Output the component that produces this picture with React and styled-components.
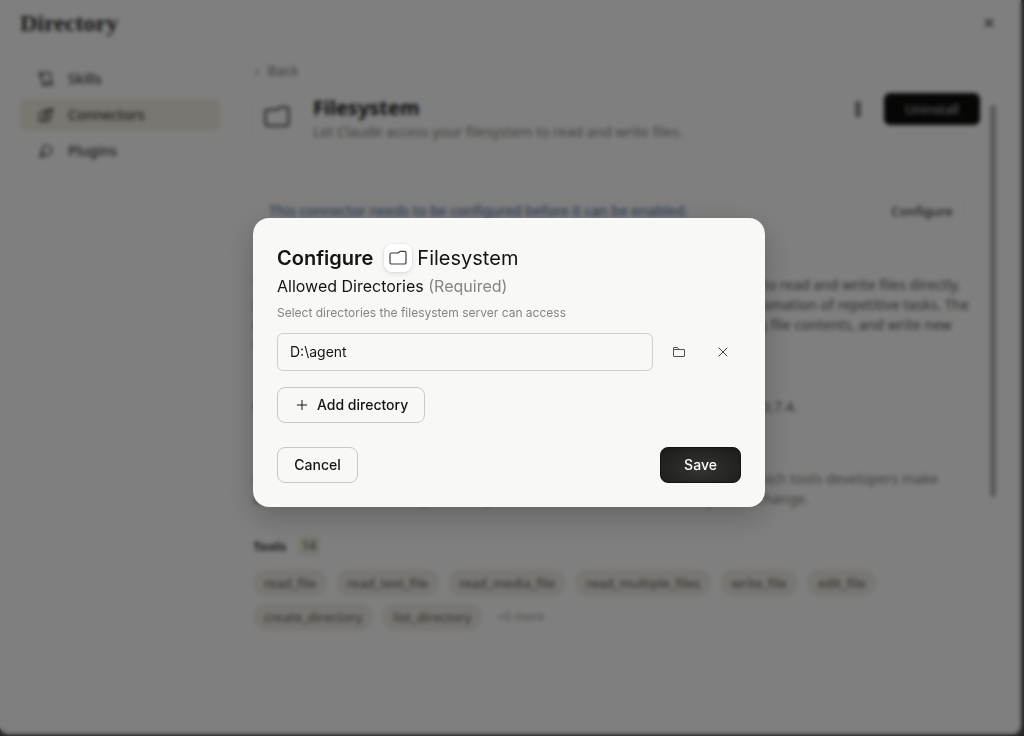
import React, { useState } from "react";
import styled, { createGlobalStyle } from "styled-components";
import { MoreVertical, Plus, Scroll, X } from "lucide-react";

const GlobalStyle = createGlobalStyle`
    * {
        box-sizing: border-box;
    }
    body {
        margin: 0;
        background: #4a4a4a;
        color: #141413;
        font-family: "Noto Sans", sans-serif;
        font-size: 14px;
        line-height: 20px;
    }
    button, input {
        font: inherit;
        color: inherit;
    }
    h1, h2, h3, p, ul {
        margin: 0;
        padding: 0;
    }
    ul {
        list-style: none;
    }
`

const Page = styled.div`
    min-height: 100vh;
    padding: 0 3px 2px 0;
    display: flex;
`

const Panel = styled.div`
    flex: 1;
    min-width: 0;
    padding: 8px 25px 24px 20px;
    background: #fff;
    border-radius: 0 0 8px 8px;
`

const PanelHeader = styled.header`
    display: flex;
    align-items: center;
    justify-content: space-between;
    height: 30px;

    h1 {
        font-family: "Liberation Serif", serif;
        font-size: 24px;
        line-height: 30px;
        color: #2a2a28;
    }
`

const PlainButton = styled.button`
    display: inline-flex;
    align-items: center;
    justify-content: center;
    padding: 0;
    border: 0;
    background: none;
    color: #3d3d3a;
    width: ${pr => pr.$size};
    height: ${pr => pr.$size};
`

const Columns = styled.div`
    display: flex;
    gap: 33px;
    padding-top: 23px;
`

const Sidebar = styled.nav`
    flex: 0 0 200px;
    display: flex;
    flex-direction: column;
    gap: 4px;
    padding-top: 2px;
`

const SideLink = styled.a`
    display: flex;
    align-items: center;
    gap: 14px;
    height: 32px;
    padding: 0 16px 0 18px;
    border-radius: 6px;
    font-weight: 500;
    text-decoration: none;
    color: #3d3d3a;
    background: ${pr => (pr.$active ? "#f0eee2" : "none")};
`

const Main = styled.main`
    flex: 1;
    min-width: 0;
`

const BackLink = styled.a`
    display: flex;
    gap: 8px;
    height: 20px;
    padding-left: 2px;
    color: #85847e;
    text-decoration: none;
`

const ScrollRow = styled.div`
    display: flex;
    gap: 10px;
    padding-top: 12px;
`

const ScrollBody = styled.div`
    flex: 1;
    min-width: 0;
`

const Thumb = styled.div`
    flex: 0 0 6px;
    height: 392px;
    margin-top: 12px;
    border-radius: 3px;
    background: #b4b4b4;
`

const TitleRow = styled.div`
    display: flex;
    align-items: flex-start;
    gap: 12px;
`

const IconTile = styled.span`
    display: inline-flex;
    align-items: center;
    justify-content: center;
    flex: none;
    width: ${pr => pr.$size};
    height: ${pr => pr.$size};
    border-radius: 8px;
    background: #fff;
    box-shadow: 0 0 0 1px rgba(0, 0, 0, 0.03), 0 2px 5px rgba(0, 0, 0, ${pr => (pr.$flat ? 0.02 : 0.1)});
`

const TitleText = styled.div`
    flex: 1;
    padding-top: 3px;

    h2 {
        font-size: 20px;
        line-height: 24px;
    }
    p {
        line-height: 24px;
        color: #85847e;
    }
`

const TitleActions = styled.div`
    display: flex;
    align-items: center;
    gap: 16px;
`

const Uninstall = styled.button`
    width: 96px;
    height: 32px;
    border: 0;
    border-radius: 6px;
    background: #0c0c0b;
    color: #c8c8c8;
    font-size: 13px;
`

const Notice = styled.div`
    display: flex;
    align-items: center;
    justify-content: space-between;
    margin-top: 51px;
    padding: 0 16px;
    color: #4a6da3;
`

const ConfigureButton = styled.button`
    width: 84px;
    height: 32px;
    border: 1px solid #f6f5f2;
    border-radius: 8px;
    background: #fff;
    color: #3d3d3a;
    font-size: 13px;
    font-weight: 500;
`

const Lines = styled.p`
    margin-top: ${pr => pr.$top};
    color: ${pr => pr.$color || "#5e5d59"};
    white-space: nowrap;

    span {
        display: block;
    }
`

const ToolsHeading = styled.h3`
    display: flex;
    gap: 12px;
    margin-top: 27px;
    font-size: 13px;
    line-height: 20px;
    color: #3d3d3a;

    span {
        padding: 0 4px;
        border-radius: 4px;
        background: #f0eee2;
        font-size: 12px;
        font-weight: 400;
    }
`

const Chips = styled.ul`
    display: flex;
    flex-wrap: wrap;
    gap: 6px 9px;
    margin-top: 13px;
    font-size: 13px;
`

const Chip = styled.li`
    padding: 4px ${pr => (pr.$more ? "6px" : "11px")};
    border-radius: 14px;
    background: ${pr => (pr.$more ? "none" : "#f0eee6")};
    color: ${pr => (pr.$more ? "#a09f99" : "#5e5d59")};
    font-size: ${pr => (pr.$more ? "12px" : "13px")};
`

const Overlay = styled.div`
    position: fixed;
    inset: 0;
    display: flex;
    align-items: center;
    justify-content: center;
    padding: 0 6px 11px 0;
    background: rgba(0, 0, 0, 0.5);
    backdrop-filter: blur(2px);
`

const Modal = styled.form`
    width: 512px;
    max-width: 100%;
    padding: 24px;
    border-radius: 16px;
    background: #f8f8f6;
    box-shadow: 0 10px 30px rgba(0, 0, 0, 0.22);
    font-family: Inter, sans-serif;
`

const ModalTitle = styled.h2`
    display: flex;
    align-items: center;
    height: 32px;
    font-size: 20px;
    line-height: 32px;
    font-weight: 400;

    strong {
        margin-right: 11px;
        font-weight: 600;
    }
    ${IconTile} {
        margin-right: 5px;
    }
`

const FieldLabel = styled.label`
    display: block;
    font-size: 16px;
    line-height: 24px;

    span {
        color: #85847e;
    }
`

const Hint = styled.p`
    margin-top: 5px;
    font-size: 12px;
    line-height: 20px;
    color: #85847e;
`

const PathRow = styled.div`
    display: flex;
    align-items: center;
    gap: 8px;
    margin: 10px 0 16px;
`

const PathInput = styled.input`
    flex: 1;
    min-width: 0;
    height: 38px;
    padding: 0 12px 2px;
    border: 1px solid #cfcecb;
    border-radius: 6px;
    background: none;
    outline: none;
`

const Button = styled.button`
    display: inline-flex;
    align-items: center;
    justify-content: center;
    gap: 7px;
    height: 36px;
    padding: 0 16px;
    border: 1px solid ${pr => (pr.$dark ? "#141413" : "#c9c8c5")};
    border-radius: 8px;
    background: ${pr => (pr.$dark ? "radial-gradient(ellipse at 50% 60%, #343433, #1a1a19)" : "none")};
    color: ${pr => (pr.$dark ? "#fff" : "#141413")};
    min-width: 81px;
    font-weight: 500;
`

const ModalFooter = styled.div`
    display: flex;
    justify-content: space-between;
    margin-top: 24px;
`

const TileFolder = ({ size, weight }) => (
    <svg width={size} height={size} viewBox="0 0 18 18" fill="none" stroke="#3d3d3a" strokeWidth={weight} strokeLinejoin="round">
        <path d="M1 5.4Q1 4 2.4 4H8.2Q9.2 4 10 3.3L10.6 2.7Q11 2.3 11.8 2.3H15.4Q17 2.3 17 3.9V13.4Q17 15 15.4 15H2.4Q1 15 1 13.4Z"/>
    </svg>
);

const SmallFolder = () => (
    <svg width="14" height="14" viewBox="0 0 14 14" fill="none" stroke="#52514d">
        <path d="M1.5 4.5V11Q1.5 11.5 2 11.5H12Q12.5 11.5 12.5 11V5Q12.5 4.5 12 4.5H7L5.5 2.5H2Q1.5 2.5 1.5 3V4.5H7"/>
    </svg>
);

const ConnectorIcon = () => (
    <svg width="16" height="16" viewBox="0 0 16 16" fill="none" stroke="currentColor" strokeWidth="1.3" strokeLinejoin="round">
        <path d="M2 5.5L8 3.5L6 8L7.5 10.5L5 14H1.5V9Z"/>
        <path d="M8 3.5L14.5 2L12.5 9L11 14H5M6 8L12 3.5M7.5 10.5L12.5 9"/>
    </svg>
);

const PluginIcon = () => (
    <svg width="16" height="16" viewBox="0 0 16 16" fill="none" stroke="currentColor" strokeWidth="1.3" strokeLinejoin="round">
        <path d="M5 4L8 2L11 3.5L14 5.5L13 9.5L9.5 12.5H5L2 14.5L4 9Z"/>
        <path d="M6 7.5L4 9L5 12.5"/>
    </svg>
);

const tools = [
    "read_file",
    "read_text_file",
    "read_media_file",
    "read_multiple_files",
    "write_file",
    "edit_file",
    "create_directory",
    "list_directory",
];

const Directory = () => (
    <Panel>
        <PanelHeader>
            <h1>Directory</h1>
            <PlainButton type="button" $size="14px" aria-label="Close">
                <X size={14} strokeWidth={3}/>
            </PlainButton>
        </PanelHeader>
        <Columns>
            <Sidebar>
                <SideLink href="#skills"><Scroll size={16}/>Skills</SideLink>
                <SideLink href="#connectors" $active><ConnectorIcon/>Connectors</SideLink>
                <SideLink href="#plugins"><PluginIcon/>Plugins</SideLink>
            </Sidebar>
            <Main>
                <BackLink href="#back"><span>‹</span>Back</BackLink>
                <ScrollRow>
                    <ScrollBody>
                        <TitleRow>
                            <IconTile $size="48px" $flat><TileFolder size={26} weight={1.4}/></IconTile>
                            <TitleText>
                                <h2>Filesystem</h2>
                                <p>Let Claude access your filesystem to read and write files.</p>
                            </TitleText>
                            <TitleActions>
                                <PlainButton type="button" $size="20px" aria-label="More">
                                    <MoreVertical size={18} strokeWidth={5}/>
                                </PlainButton>
                                <Uninstall type="button">Uninstall</Uninstall>
                            </TitleActions>
                        </TitleRow>
                        <Notice>
                            <span>This connector needs to be configured before it can be enabled.</span>
                            <ConfigureButton type="button">Configure</ConfigureButton>
                        </Notice>
                        <Lines $top="48px">
                            <span>This extension allows Claude to interact with your local filesystem, enabling it to read and write files directly.</span>
                            <span>It can be used for code editing, file organization, data processing, and the automation of repetitive tasks. The</span>
                            <span>extension provides tools to browse folders, search for files, look at the existing file contents, and write new</span>
                            <span>files.</span>
                        </Lines>
                        <Lines $top="42px">
                            <span>Runs on macOS and Windows, with Claude Desktop 0.10.10 and later, version 0.7.4.</span>
                        </Lines>
                        <Lines $top="52px" $color="#85847e">
                            <span>Only use connectors from developers you trust. Anthropic does not control which tools developers make</span>
                            <span>available and cannot verify that they will work as intended or that they won’t change.</span>
                        </Lines>
                        <ToolsHeading>Tools <span>14</span></ToolsHeading>
                        <Chips>
                            {tools.map(tool => <Chip key={tool}>{tool}</Chip>)}
                            <Chip $more>+6 more</Chip>
                        </Chips>
                    </ScrollBody>
                    <Thumb/>
                </ScrollRow>
            </Main>
        </Columns>
    </Panel>
);

const ConfigureModal = () => {
    const [path, setPath] = useState("D:\\agent");

    return (
        <Overlay>
            <Modal role="dialog" aria-label="Configure Filesystem" onSubmit={e => e.preventDefault()}>
                <ModalTitle>
                    <strong>Configure</strong>
                    <IconTile $size="28px"><TileFolder size={18} weight={1.2}/></IconTile>
                    Filesystem
                </ModalTitle>
                <FieldLabel htmlFor="directory">Allowed Directories <span>(Required)</span></FieldLabel>
                <Hint>Select directories the filesystem server can access</Hint>
                <PathRow>
                    <PathInput id="directory" type="text" value={path} onChange={e => setPath(e.target.value)}/>
                    <PlainButton type="button" $size="36px" aria-label="Browse"><SmallFolder/></PlainButton>
                    <PlainButton type="button" $size="36px" aria-label="Remove" onClick={() => setPath("")}>
                        <X size={16} strokeWidth={1.5}/>
                    </PlainButton>
                </PathRow>
                <Button type="button"><Plus size={16} strokeWidth={1.5}/>Add directory</Button>
                <ModalFooter>
                    <Button type="button">Cancel</Button>
                    <Button type="submit" $dark>Save</Button>
                </ModalFooter>
            </Modal>
        </Overlay>
    );
}

const App = () => {
    return (
        <Page>
            <GlobalStyle/>
            <Directory/>
            <ConfigureModal/>
        </Page>
    );
}

export default App;
